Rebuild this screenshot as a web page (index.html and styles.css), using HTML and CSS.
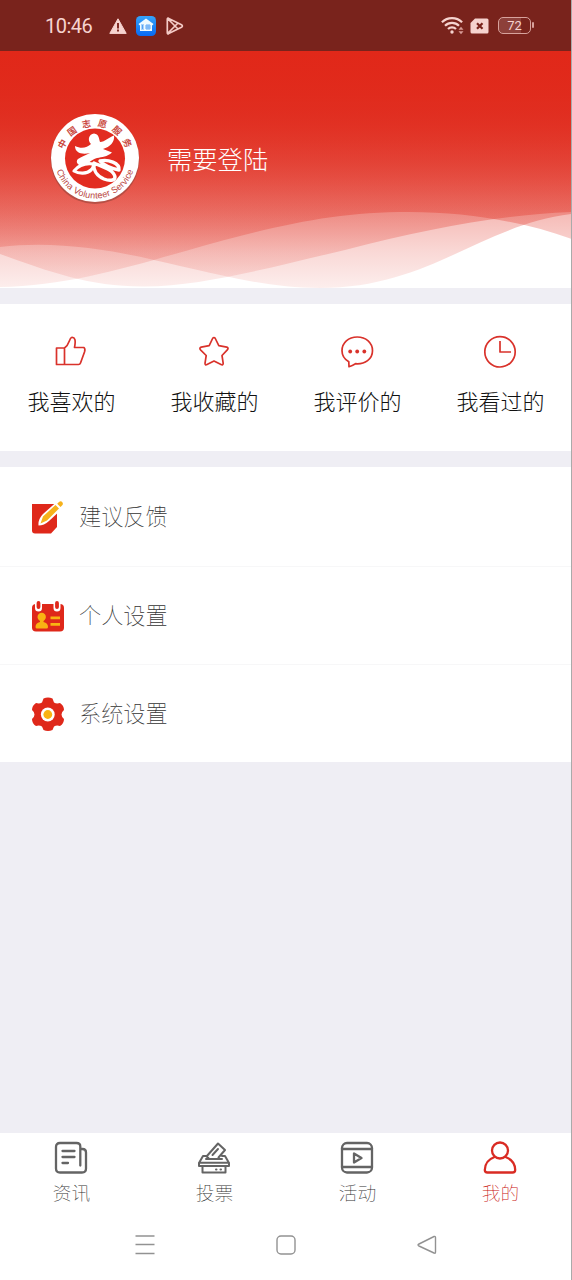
FILE: index.html
```html
<!DOCTYPE html>
<html lang="zh-CN">
<head>
<meta charset="utf-8">
<title>我的</title>
<link rel="stylesheet" href="styles.css">
</head>
<body>
<div class="screen">
  <header class="status">
    <span class="clock">10:46</span>
    <svg class="warn" width="18" height="16" viewBox="0 0 18 16"><path d="M9 .8 17.2 15.4H.8z" fill="#f6d3cf" stroke="#f6d3cf" stroke-linejoin="round"/><path d="M9 5v5.400M9 11.600v2" stroke="#79231c" stroke-width="1.900"/></svg>
    <svg class="home" width="20" height="20" viewBox="0 0 20 20"><defs><linearGradient id="blue" x2="0" y2="1"><stop stop-color="#35a4fb"/><stop offset="1" stop-color="#0869f2"/></linearGradient></defs><rect width="20" height="20" rx="4.500" fill="url(#blue)"/><path d="M10 2.500 17.500 8l-1 1.200H16V15H4V9.200H3.500L2.500 8z" fill="#eefaff"/><path d="M5 9h3M5 11h3M6.500 9v4M5 13h3M10 9h4v4h-4zM10 11h4M12 9v4" fill="none" stroke="#3d96f4" stroke-width=".8"/></svg>
    <svg class="play" width="18" height="18" viewBox="0 0 18 18" fill="none" stroke="#f4cbc6" stroke-width="1.700" stroke-linejoin="round"><path d="M1.300 2.200Q1.300.8 2.700 1.400L15.500 7.800Q17.300 9 15.500 10.200L2.700 16.600Q1.300 17.200 1.300 15.800zM2 2l10 10M2 16 12 6"/></svg>
    <span class="spacer"></span>
    <svg class="wifi" width="24" height="19" viewBox="0 0 24 19" fill="none" stroke="#f6d3cf" stroke-width="2.200"><path d="M.9 6.200a14.500 14.500 0 0 1 20.200 0M4 9.700a10 10 0 0 1 14 0M7 13a5.700 5.700 0 0 1 8 0"/><circle cx="11" cy="16" r="1.700" fill="#f6d3cf" stroke="none"/><path d="m17.500 13.800 2.500-3 2.500 3zM17.500 15.200l2.500 3 2.500-3z" fill="#d79b96" stroke="none"/></svg>
    <svg class="sim" width="19" height="16" viewBox="0 0 19 16"><path d="M5 .5h12q1.500 0 1.500 1.500v12q0 1.500-1.500 1.500H2Q.5 15.500.5 14V5z" fill="#f6d3cf"/><path d="m7 5.200 5.500 5.600m0-5.600L7 10.800" stroke="#79231c" stroke-width="2.200"/></svg>
    <span class="battery">72</span>
  </header>

  <section class="hero">
    <svg class="waves" width="572" height="237" viewBox="0 51 572 237">
      <defs><linearGradient id="fade" gradientUnits="userSpaceOnUse" x1="0" y1="51" x2="0" y2="288">
        <stop offset="0" stop-color="#e12819"/>
        <stop offset=".22" stop-color="#e02a1c" stop-opacity=".78"/>
        <stop offset=".42" stop-color="#e02a1c" stop-opacity=".56"/>
        <stop offset=".6" stop-color="#e02a1c" stop-opacity=".39"/>
        <stop offset=".72" stop-color="#e02a1c" stop-opacity=".29"/>
        <stop offset=".85" stop-color="#e02a1c" stop-opacity=".18"/>
        <stop offset="1" stop-color="#e02a1c" stop-opacity=".08"/>
      </linearGradient></defs>
      <g fill="url(#fade)">
        <path d="M0 51V247C65 239 130 254 180 266C230 277 270 288 320 288C430 288 480 225 572 214V51z"/>
        <path d="M0 51V254C50 272 91 287 145 286.500C205 286 280 265 345 250C430 228 500 215 572 212V51z"/>
        <path d="M0 51V287C84 286 160 256 244 235C303 220 350 212 409 212C468 212 525 222 572 239V51z"/>
      </g>
    </svg>
    <div class="profile">
      <svg class="seal" width="90" height="92" viewBox="0 0 90 92">
        <defs>
          <path id="top-arc" d="M12.500 46A32.500 32.500 0 0 1 77.500 46"/>
          <path id="bottom-arc" d="M4.500 45A40.500 40.500 0 0 0 85.500 45"/>
        </defs>
        <circle cx="45" cy="46.500" r="44.500" fill="#a7493f" opacity=".75"/>
        <circle cx="45" cy="45" r="44" fill="#fff"/>
        <circle cx="45" cy="45.500" r="30" fill="#e22c20"/>
        <text class="seal-cn"><textPath href="#top-arc" startOffset="52%" text-anchor="middle">中国志愿服务</textPath></text>
        <text class="seal-en"><textPath href="#bottom-arc" startOffset="50%" text-anchor="middle">China Volunteer Service</textPath></text>
        <path d="M41 31C37 27 39 21 44 20.500C49 21 49 26 50 29C55 29 59 24 64 22.500C65 29 60 34 53 36L62 39.500C57 44 52 44 47 45C41 47 38 51 33 52.500C28 53 25 49 28 46C31 44 36 42 40 40C32 42 25 40 25 33C31 36 37 35 41 31z" fill="#fff"/>
        <path d="M43 51C36 50 29 52 24 58C29 61 37 61 41 57C43 55 44 53 43 51z" fill="#e22c20" stroke="#fff" stroke-width="3.200" stroke-linejoin="round"/>
        <path d="M44 50C43 57 47 63 54 66C59 68 65 68 65 64C64 57 53 54 44 50zM50 48C58 46 70 50 69 57C63 56 55 53 50 48z" fill="#e22c20" stroke="#fff" stroke-width="3.400" stroke-linejoin="round"/>
      </svg>
      <span class="login">需要登陆</span>
    </div>
  </section>

  <nav class="quick">
    <a class="quick-item"><svg width="34" height="34" viewBox="0 0 34 34"><path d="M2.500 13h8v16.500h-8zM10.500 13C16 9 15 3.500 17.500 2.500C21 2 22 5 20.500 12.500H30Q31.500 14 30.500 17L26.500 28Q26 29.500 24.500 29.500H10.500"/></svg><span>我喜欢的</span></a>
    <a class="quick-item"><svg width="34" height="34" viewBox="0 0 34 34"><path d="M15.600 3.500Q17 1.500 18.300 3.500L21.800 10.700L29.800 12.100Q32 13 30.300 14.800L25 20.500L26.200 28.300Q26 30.500 24 29.500L17 26L10 29.500Q8 30.500 8 28.300L9.200 20.500L3.500 14.800Q2 13 4.200 12.100L12.200 10.700z"/></svg><span>我收藏的</span></a>
    <a class="quick-item"><svg width="34" height="34" viewBox="0 0 34 34"><path d="M8.800 26.700C5 24.500 2 20.500 2 15.700C2 8 8.500 2 17.200 2C26 2 32.500 8 32.500 15.700C32.500 24 25 29.500 15.500 28.700C13.500 30 11.500 31 9 31.700z"/><g class="dots"><circle cx="10.200" cy="16.500" r="1.900"/><circle cx="17.200" cy="16.500" r="1.900"/><circle cx="24.300" cy="16.500" r="1.900"/></g></svg><span>我评价的</span></a>
    <a class="quick-item"><svg width="34" height="34" viewBox="0 0 34 34"><circle cx="17" cy="16.800" r="15.200"/><path d="M17 6v11h11"/></svg><span>我看过的</span></a>
  </nav>

  <main class="list">
    <a class="row"><svg width="34" height="36" viewBox="0 0 34 36"><path d="M1 5H26V28L20 34.500H4Q1 34.500 1 31.500z" fill="#df281a"/><path d="M7.500 26.500Q7 20 12 15L25.500 3Q29.500-.5 32.500 2.500Q35 6 31.500 9.500L18 22Q13 26.500 7.500 26.500z" fill="#fff"/><path d="M9.500 24.500 12 17.500 24.500 6 28 9.500 16 21.500zM26.200 4.700 28 3Q30 1.500 31.500 3.500Q32.500 5 31 6.500L29.500 8z" fill="#f6b21b"/></svg><span>建议反馈</span></a>
    <a class="row"><svg width="34" height="36" viewBox="0 0 34 36"><rect x="1" y="6" width="32" height="27.500" rx="4" fill="#df281a"/><path d="M7.500 5v5M26 5v5" stroke="#fff" stroke-width="7" stroke-linecap="round"/><path d="M7.500 5v4M26 5v4" stroke="#df281a" stroke-width="3.800" stroke-linecap="round"/><circle cx="10.700" cy="19" r="4.200" fill="#f9b313"/><path d="M9 20h3.500v4Q17 25 17 29Q17 30.500 15.500 30.500H6Q4.500 30.500 4.500 29Q4.500 25 9 24zM19.500 18.500h9.500v2.800h-9.500zM19.500 25h9.500v2.800h-9.500z" fill="#f9b313"/></svg><span>个人设置</span></a>
    <a class="row"><svg width="34" height="36" viewBox="0 0 34 36"><path d="M12.500 2.500Q17 .5 21.500 2.500L23 6.500Q25.500 8 29 7Q33 9.500 33 14Q30.500 16 30.500 18.500Q30.500 21 33 23Q33 27.500 29 30Q25.500 29 23 30.500L21.500 34Q17 36 12.500 34L11 30.500Q8.500 29 5 30Q1 27.500 1 23Q3.500 21 3.500 18.500Q3.500 16 1 14Q1 9.500 5 7Q8.500 8 11 6.500z" fill="#df281a"/><circle cx="16.800" cy="18.500" r="6.900" fill="#fff"/><circle cx="16.800" cy="18.500" r="4.400" fill="#f9b313"/></svg><span>系统设置</span></a>
  </main>

  <nav class="tabs">
    <a class="tab"><svg width="34" height="34" viewBox="0 0 34 34"><path d="M26.300 24.500V5.500Q26.300 2 22.500 2H6Q2 2 2 6V27.500Q2 31.500 6 31.500H28Q32 31.500 32 27.500V11.500Q32 8 28.500 8H26.500M8.500 10H20.500M8.500 16H20.500M8.500 22H14"/></svg><span>资讯</span></a>
    <a class="tab"><svg class="thin" width="34" height="34" viewBox="0 0 34 34"><path d="M9.500 15H6L2 22V25H32V22L28 15H25M9.500 15.500 21 2.500 28 9 21.500 16.500M9 18h16M15.500 14 21 8M2 21.800H32M5.500 25.500V31.500H28.500V25.500M9.500 15.500l2 1.500M19 28.500h.5M23.500 28.500h.5"/></svg><span>投票</span></a>
    <a class="tab"><svg width="34" height="34" viewBox="0 0 34 34"><rect x="2" y="2" width="30" height="29.500" rx="5"/><path d="M2 8H32M2 26H32M14 12.500V21.500L21.500 17z"/></svg><span>活动</span></a>
    <a class="tab active"><svg width="34" height="34" viewBox="0 0 34 34"><circle cx="17" cy="9.500" r="8"/><path d="M11.500 16Q2 19.500 1.800 29Q1.800 31.500 4.500 31.500H29.500Q32.200 31.500 32.200 29Q32 19.500 22.500 16"/></svg><span>我的</span></a>
  </nav>

  <footer class="system">
    <svg width="22" height="22" viewBox="0 0 22 22"><path d="M1.500 2H20.500M1.500 10.500H20.500M1.500 19.500H20.500"/></svg>
    <svg width="22" height="22" viewBox="0 0 22 22"><rect x="2" y="2" width="18" height="18" rx="4"/></svg>
    <svg width="22" height="22" viewBox="0 0 22 22"><path d="M18 2.500Q19.500 2 19.500 3.500V18Q19.500 19.800 18 19L3 12Q1 11 3 10z"/></svg>
  </footer>
</div>
</body>
</html>
```
FILE: styles.css
```css
* { box-sizing: border-box; }
body { margin: 0; font-family: "Noto Sans CJK SC", sans-serif; font-weight: 100; }
.screen { width: 572px; height: 1280px; display: flex; flex-direction: column; background: #efeef4; border-right: 1px solid #aaa; overflow: hidden; }
svg { display: block; flex: none; }

.status { height: 51px; flex: none; display: flex; align-items: center; padding: 0 40px 0 45px; background: #79231c; color: #f6d3cf; }
.clock { width: 64px; font: 400 20px Roboto, sans-serif; letter-spacing: -.5px; padding-top: 1px; }
.home { margin-left: 9px; }
.play { margin-left: 10px; }
.spacer { flex: 1; }
.wifi { margin-right: -1px; }
.sim { margin-left: 6px; }
.battery { position: relative; width: 33px; height: 17px; margin-left: 9px; border: 1.500px solid #d7a29c; border-radius: 5px; font: 400 13px/15px Roboto, sans-serif; text-align: center; background: linear-gradient(90deg, #8d403a 72%, #79231c 72%); }
.battery::after { content: ""; position: absolute; right: -4px; top: 4px; width: 2px; height: 6px; background: #d7a29c; border-radius: 1px; }

.hero { display: grid; height: 237px; flex: none; background: #fff; overflow: hidden; }
.waves, .profile { grid-area: 1 / 1; }
.profile { display: flex; align-items: center; gap: 27px; height: 92px; margin: 62px 0 0 50px; z-index: 1; }
.seal-cn { font: 700 9px "Noto Sans CJK SC", sans-serif; fill: #ca493f; letter-spacing: 5.600px; }
.seal-en { font: 400 9px "Liberation Sans", sans-serif; fill: #b8443c; letter-spacing: .2px; }
.login { font-size: 25.300px; line-height: 30px; padding-bottom: 3px; color: #fff; font-weight: 300; }

.quick { display: flex; height: 147px; flex: none; margin-top: 16px; background: #fff; margin-right: -1px; }
.quick-item { width: 143px; padding-top: 31px; display: flex; flex-direction: column; align-items: center; font-size: 22px; line-height: 32px; color: #111; gap: 15px; font-weight: 300; }
.quick svg { fill: none; stroke: #d9322b; stroke-width: 1.700; stroke-linejoin: round; margin-right: 1px; }
.quick .dots { fill: #d9322b; stroke: none; }

.list { margin-top: 16px; height: 295px; flex: none; display: grid; grid-template-rows: 100px 98px 97px; background: #fff; }
.row { display: flex; align-items: center; gap: 14px; padding-left: 31px; border-bottom: 1px solid #f7f7f8; font-size: 22.200px; color: #333; }
.row:last-child { border: 0; }
.row span { line-height: 32px; padding-bottom: 4px; }

.tabs { display: flex; margin-top: auto; height: 78px; flex: none; background: #fff; margin-right: -1px; }
.tab { width: 143px; padding-top: 8px; display: flex; flex-direction: column; align-items: center; gap: 3px; font-size: 18.700px; line-height: 28px; color: #333; }
.tab svg { fill: none; stroke: #646464; stroke-width: 2.300; stroke-linejoin: round; stroke-linecap: round; margin-right: 1px; }
.tab svg.thin { stroke-width: 2; }
.tab.active { color: #c80f0b; }
.tab.active svg { stroke: #d92b23; }

.system { display: flex; height: 69px; flex: none; padding: 23px 133px 0 134px; justify-content: space-between; background: #fff; }
.system svg { fill: none; stroke: #929292; stroke-width: 1.400; }
```
